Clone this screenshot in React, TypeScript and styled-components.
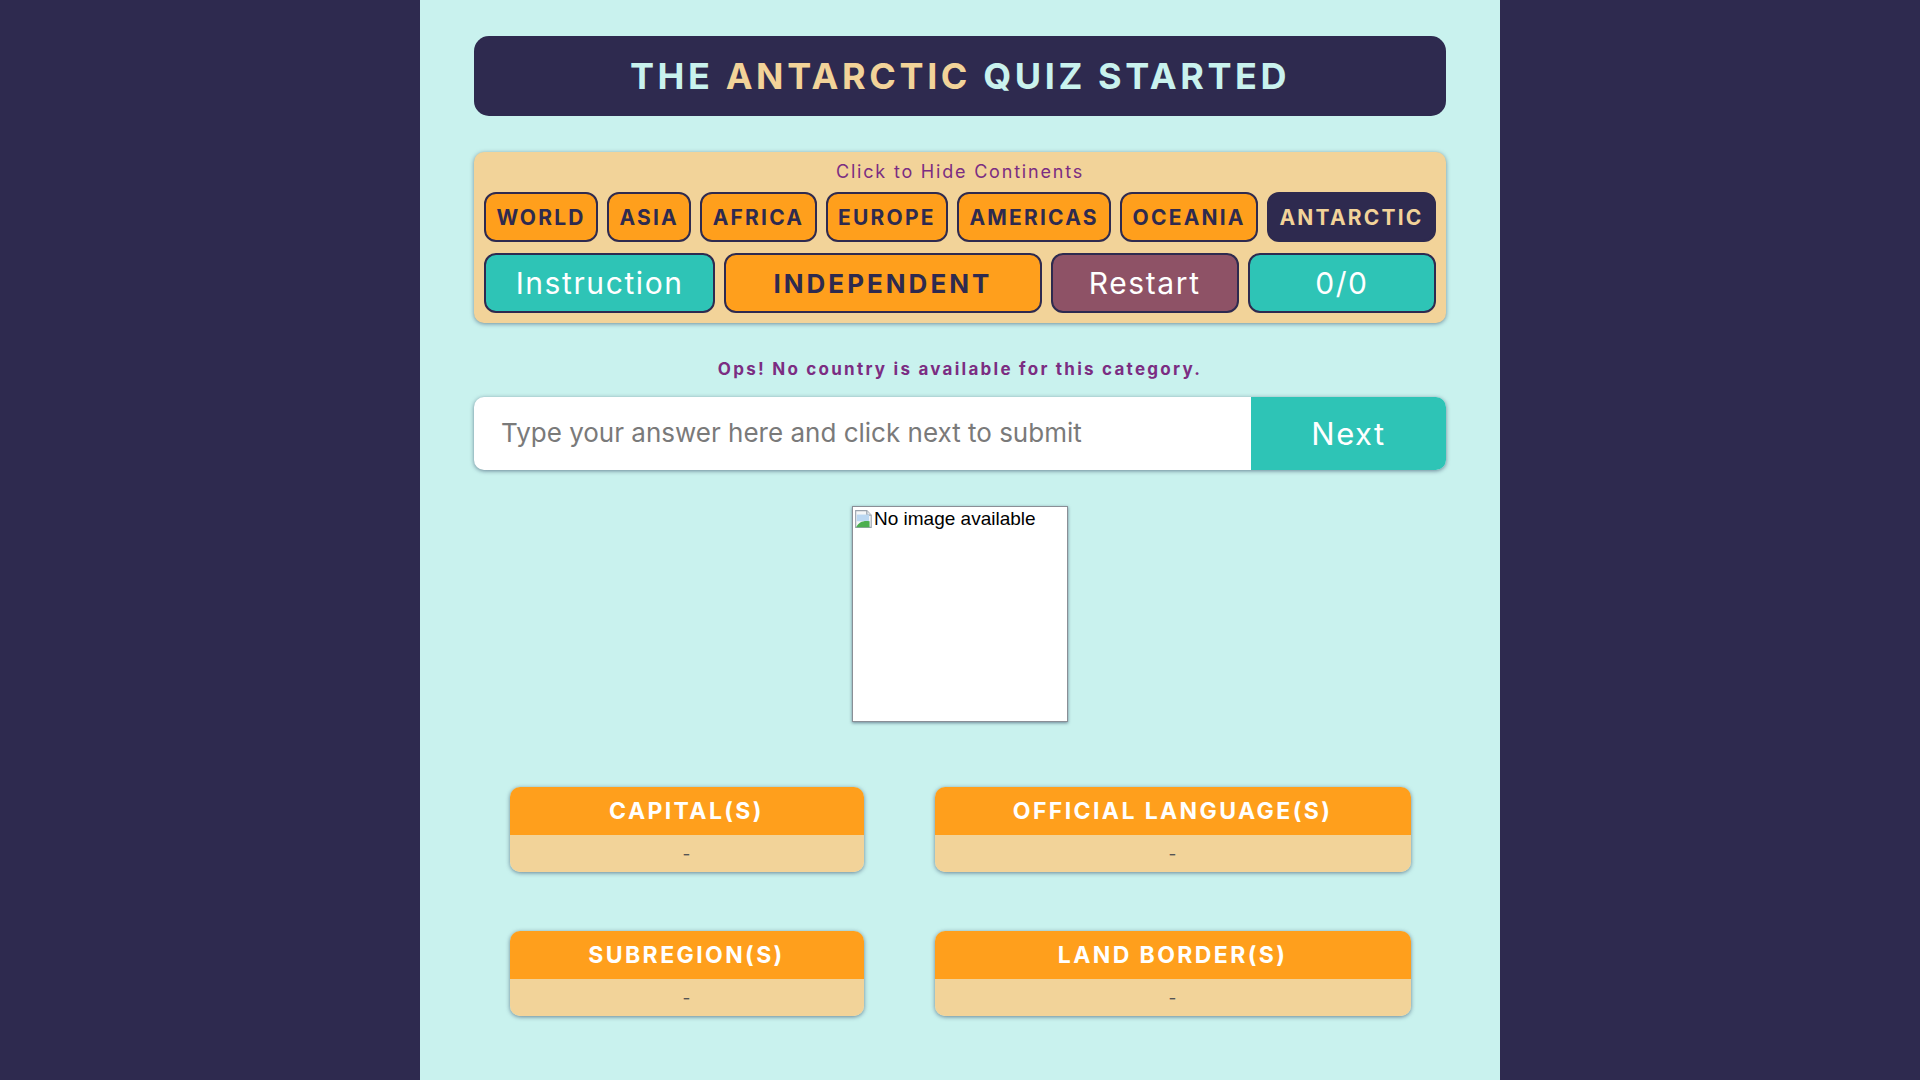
import React from "react";
import styled, { createGlobalStyle } from "styled-components";

const GlobalStyle = createGlobalStyle`
  html { overflow-y: scroll; }
  html, body { margin: 0; padding: 0; }
  body {
    background: #2e2a4f;
    font-family: Inter, "Noto Sans", "Liberation Sans", sans-serif;
  }
  ::-webkit-scrollbar { width: 15px; background: #f1f1f1; }
  ::-webkit-scrollbar-thumb { background: #c1c1c1; border: 3px solid #f1f1f1; border-radius: 8px; }
  * { box-sizing: border-box; }
`;

const Page = styled.main`
  max-width: 1080px;
  margin: 0 auto;
  min-height: 100vh;
  background: #c9f2ee;
  padding: 36px 54px 82px;
  display: flex;
  flex-direction: column;
`;

const TitleBar = styled.header`
  height: 80px;
  border-radius: 15px;
  background: #2e2a4f;
  display: flex;
  align-items: center;
  justify-content: center;
`;

const Title = styled.h1`
  margin: 0;
  font-size: 36px;
  font-weight: 700;
  letter-spacing: 3.6px;
  color: #c9f2ee;
`;

const Accent = styled.span`
  color: #f2d399;
`;

const Panel = styled.section`
  margin-top: 36px;
  background: #f2d399;
  border-radius: 10px;
  box-shadow: 0 1px 4px rgba(40, 60, 90, 0.55);
  padding: 10px 10px 10px;
  display: flex;
  flex-direction: column;
`;

const Hint = styled.div`
  height: 20px;
  line-height: 20px;
  text-align: center;
  font-size: 18px;
  letter-spacing: 1.8px;
  color: #7b2d82;
`;

const ContinentRow = styled.div`
  margin-top: 10px;
  display: flex;
  gap: 9px;
`;

const ContinentButton = styled.button<{ $active?: boolean }>`
  flex: 1 1 auto;
  height: 50px;
  padding: 0 10px;
  border: 2px solid #2e2a4f;
  border-radius: 12px;
  background: ${(p) => (p.$active ? "#2e2a4f" : "#ff9f1c")};
  color: ${(p) => (p.$active ? "#f2d399" : "#2e2a4f")};
  font-family: inherit;
  font-size: 21px;
  font-weight: 700;
  letter-spacing: 2.2px;
  cursor: pointer;
`;

const ControlRow = styled.div`
  margin-top: 11px;
  display: flex;
  gap: 9px;
`;

const ControlButton = styled.button<{ $grow: number; $bg: string; $fg: string; $bold?: boolean }>`
  flex: ${(p) => p.$grow} 1 0;
  height: 60px;
  border: 2px solid #2e2a4f;
  border-radius: 12px;
  background: ${(p) => p.$bg};
  color: ${(p) => p.$fg};
  font-family: inherit;
  font-size: ${(p) => (p.$bold ? "26px" : "30px")};
  font-weight: ${(p) => (p.$bold ? 700 : 400)};
  letter-spacing: ${(p) => (p.$bold ? "3px" : "1.6px")};
  cursor: pointer;
`;

const Message = styled.p`
  margin: 36px 0 0;
  height: 20px;
  line-height: 20px;
  text-align: center;
  font-size: 17px;
  font-weight: 700;
  letter-spacing: 2.25px;
  color: #7b2d82;
`;

const AnswerRow = styled.form`
  margin-top: 18px;
  height: 73px;
  display: flex;
  border-radius: 10px;
  overflow: hidden;
  background: #fff;
  box-shadow: 0 1px 4px rgba(40, 60, 90, 0.6);
`;

const AnswerInput = styled.input`
  flex: 1;
  min-width: 0;
  border: none;
  outline: none;
  padding: 0 27px 3px;
  font-family: inherit;
  font-size: 26px;
  color: #222;
  background: transparent;
  &::placeholder { color: #7a7a7a; }
`;

const NextButton = styled.button`
  width: 195px;
  border: none;
  background: #2ec4b6;
  color: #fff;
  font-family: inherit;
  font-size: 31px;
  letter-spacing: 1.5px;
  cursor: pointer;
`;

const ImageBox = styled.div`
  margin: 36px auto 0;
  width: 216px;
  height: 216px;
  background: #fff;
  border: 1px solid #8a8f96;
  box-shadow: 0 1px 3px rgba(40, 60, 90, 0.6);
  display: flex;
  align-items: flex-start;
  padding: 2px 1px;
`;

const AltText = styled.span`
  font-family: "Liberation Sans", Arial, sans-serif;
  font-size: 19px;
  line-height: 20px;
  color: #000;
`;

const InfoGrid = styled.div`
  margin-top: 65px;
  display: flex;
  flex-direction: column;
  gap: 59px;
`;

const InfoRow = styled.div`
  display: flex;
  justify-content: space-around;
`;

const Card = styled.div<{ $w: number }>`
  width: ${(p) => p.$w}px;
  border-radius: 10px;
  overflow: hidden;
  box-shadow: 0 1px 4px rgba(40, 60, 90, 0.6);
`;

const CardHead = styled.div`
  height: 48px;
  background: #ff9f1c;
  color: #fff;
  display: flex;
  align-items: center;
  justify-content: center;
  font-size: 23px;
  font-weight: 700;
  letter-spacing: 2.4px;
`;

const CardBody = styled.div`
  height: 37px;
  background: #f2d399;
  color: #555;
  display: flex;
  align-items: center;
  justify-content: center;
  font-size: 17px;
`;

const BrokenIcon = () => (
  <svg width="20" height="20" viewBox="0 0 18 18">
    <path d="M1.5 1.5h10l4 4v11h-14z" fill="#f4f6f8" stroke="#9aa3ad" />
    <path d="M11.5 1.5v4h4" fill="#e2e6ea" stroke="#9aa3ad" />
    <rect x="2.5" y="5" width="11" height="6" fill="#bcd8f2" />
    <path d="M2 16.5c2-5 7-6.5 12-5.5v5.5z" fill="#4caf50" />
  </svg>
);

const continents = ["WORLD", "ASIA", "AFRICA", "EUROPE", "AMERICAS", "OCEANIA", "ANTARCTIC"];

const InfoCard = ({ title, w }: { title: string; w: number }) => (
  <Card $w={w}>
    <CardHead>{title}</CardHead>
    <CardBody>-</CardBody>
  </Card>
);

export default function App() {
  return (
    <>
      <GlobalStyle />
      <Page>
        <TitleBar>
          <Title>
            THE <Accent>ANTARCTIC</Accent> QUIZ STARTED
          </Title>
        </TitleBar>

        <Panel>
          <Hint>Click to Hide Continents</Hint>
          <ContinentRow>
            {continents.map((c) => (
              <ContinentButton key={c} $active={c === "ANTARCTIC"}>
                {c}
              </ContinentButton>
            ))}
          </ContinentRow>
          <ControlRow>
            <ControlButton $grow={1.25} $bg="#2ec4b6" $fg="#fff">Instruction</ControlButton>
            <ControlButton $grow={1.75} $bg="#ff9f1c" $fg="#2e2a4f" $bold>INDEPENDENT</ControlButton>
            <ControlButton $grow={1} $bg="#8e5266" $fg="#fff">Restart</ControlButton>
            <ControlButton $grow={1} $bg="#2ec4b6" $fg="#fff">0/0</ControlButton>
          </ControlRow>
        </Panel>

        <Message>Ops! No country is available for this category.</Message>

        <AnswerRow onSubmit={(e) => e.preventDefault()}>
          <AnswerInput placeholder="Type your answer here and click next to submit" />
          <NextButton type="submit">Next</NextButton>
        </AnswerRow>

        <ImageBox>
          <BrokenIcon />
          <AltText>No image available</AltText>
        </ImageBox>

        <InfoGrid>
          <InfoRow>
            <InfoCard title="CAPITAL(S)" w={354} />
            <InfoCard title="OFFICIAL LANGUAGE(S)" w={476} />
          </InfoRow>
          <InfoRow>
            <InfoCard title="SUBREGION(S)" w={354} />
            <InfoCard title="LAND BORDER(S)" w={476} />
          </InfoRow>
        </InfoGrid>
      </Page>
    </>
  );
}
